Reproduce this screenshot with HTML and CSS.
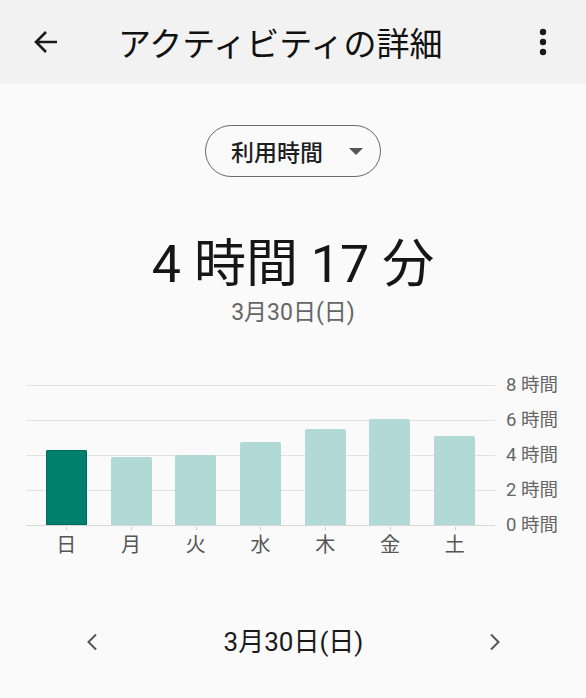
FILE: index.html
```html
<!DOCTYPE html>
<html lang="ja">
<head>
  <meta charset="UTF-8">
  <meta name="viewport" content="width=device-width, initial-scale=1.0">
  <title>アクティビティの詳細</title>
  <link rel="stylesheet" href="styles.css">
</head>
<body>
  <header class="app-bar">
    <button class="icon-btn back" aria-label="戻る">
      <svg width="26" height="26" viewBox="0 0 26 26"><path d="M24 13H3M13 3L3 13l10 10" fill="none" stroke="#1a1a1a" stroke-width="2.6"/></svg>
    </button>
    <h1 class="app-title">アクティビティの詳細</h1>
    <button class="icon-btn more" aria-label="その他">
      <svg width="8" height="28" viewBox="0 0 8 28"><circle cx="4" cy="4" r="3.2"/><circle cx="4" cy="14" r="3.2"/><circle cx="4" cy="24" r="3.2"/></svg>
    </button>
  </header>

  <main class="content">
    <div class="selector">
      <span>利用時間</span>
      <span class="caret"></span>
    </div>

    <div class="total">4 時間 17 分</div>
    <div class="total-date">3月30日(日)</div>

    <div class="chart">
      <div class="plot-col">
        <div class="plot">
          <div class="bar-slot"><div class="bar selected" style="height: 75px"></div></div>
          <div class="bar-slot"><div class="bar" style="height: 68px"></div></div>
          <div class="bar-slot"><div class="bar" style="height: 70px"></div></div>
          <div class="bar-slot"><div class="bar" style="height: 83px"></div></div>
          <div class="bar-slot"><div class="bar" style="height: 96px"></div></div>
          <div class="bar-slot"><div class="bar" style="height: 106px"></div></div>
          <div class="bar-slot"><div class="bar" style="height: 89px"></div></div>
        </div>
        <div class="x-labels">
          <div>日</div><div>月</div><div>火</div><div>水</div><div>木</div><div>金</div><div>土</div>
        </div>
      </div>
      <div class="y-labels">
        <div>8 時間</div><div>6 時間</div><div>4 時間</div><div>2 時間</div><div>0 時間</div>
      </div>
    </div>

    <div class="day-nav">
      <button class="icon-btn chevron" aria-label="前の日">
        <svg width="12" height="18" viewBox="0 0 12 18"><path d="M10 1.5L2.5 9l7.5 7.5" fill="none" stroke="#555" stroke-width="2"/></svg>
      </button>
      <span class="day-nav-date">3月30日(日)</span>
      <button class="icon-btn chevron" aria-label="次の日">
        <svg width="12" height="18" viewBox="0 0 12 18"><path d="M2 1.5L9.5 9 2 16.5" fill="none" stroke="#555" stroke-width="2"/></svg>
      </button>
    </div>
  </main>
</body>
</html>
```

FILE: styles.css
```css
body {
  margin: 0;
  background: #fafafa;
  font-family: Roboto, "Noto Sans CJK JP", sans-serif;
  color: #1a1a1a;
}
.icon-btn {
  background: none;
  border: none;
  padding: 0;
  display: flex;
  align-items: center;
  justify-content: center;
  cursor: pointer;
}
.app-bar {
  height: 84px;
  background: #f2f2f2;
  display: flex;
  align-items: center;
  padding: 0 33px 0 33px;
}
.back {
  width: 26px;
  height: 26px;
}
.app-title {
  margin: 0 0 0 59px;
  flex: 1;
  font-family: "Noto Sans CJK JP", sans-serif;
  font-size: 33px;
  font-weight: 400;
  line-height: 1;
  color: #111;
}
.more {
  width: 8px;
  height: 28px;
  margin-right: 6px;
  fill: #1a1a1a;
}
.content {
  display: flex;
  flex-direction: column;
  align-items: center;
}
.selector {
  margin-top: 41px;
  width: 176px;
  height: 52px;
  box-sizing: border-box;
  border: 1.5px solid #6a6a6a;
  border-radius: 26px;
  display: flex;
  align-items: center;
  padding-left: 25px;
  gap: 26px;
  font-family: "Noto Sans CJK JP", sans-serif;
  font-size: 23px;
  font-weight: 500;
  color: #1e1e1e;
}
.caret {
  width: 0;
  height: 0;
  border-left: 7px solid transparent;
  border-right: 7px solid transparent;
  border-top: 7px solid #555;
}
.total {
  margin-top: 56px;
  font-size: 52px;
  line-height: 64px;
  color: #161616;
}
.total-date {
  margin-top: 2px;
  font-size: 23px;
  line-height: 28px;
  color: #666;
}
.chart {
  margin-top: 58px;
  width: 100%;
  display: flex;
  padding-left: 26px;
  box-sizing: border-box;
}
.plot-col {
  width: 469px;
}
.plot {
  height: 140px;
  display: grid;
  grid-template-columns: repeat(7, 1fr);
  padding: 0 8px;
  border-bottom: 1px solid #d8d8d8;
  background: repeating-linear-gradient(to bottom, #e2e2e2 0, #e2e2e2 1px, transparent 1px, transparent 35px);
}
.bar-slot {
  display: flex;
  align-items: flex-end;
  justify-content: center;
}
.bar {
  width: 41px;
  background: #b1dad7;
  border-radius: 2px 2px 0 0;
}
.bar.selected {
  background: #00806f;
  box-shadow: inset 0 0 0 1px #006b5c;
}
.x-labels {
  display: grid;
  grid-template-columns: repeat(7, 1fr);
  padding: 0 8px;
  text-align: center;
  font-size: 20px;
  line-height: 28px;
  color: #555;
}
.x-labels div {
  position: relative;
  padding-top: 5px;
}
.x-labels div::before {
  content: "";
  position: absolute;
  top: 1px;
  left: 50%;
  width: 1px;
  height: 3px;
  background: #ccc;
}
.y-labels {
  margin-top: -17px;
  margin-left: 11px;
  font-size: 18.5px;
  line-height: 35px;
  color: #666;
}
.day-nav {
  margin-top: 67px;
  width: 100%;
  display: flex;
  align-items: center;
  justify-content: space-between;
  padding: 0 85px 0 86px;
  box-sizing: border-box;
}
.chevron {
  width: 12px;
  height: 18px;
}
.day-nav-date {
  font-size: 26px;
  line-height: 32px;
  color: #1a1a1a;
}
```
